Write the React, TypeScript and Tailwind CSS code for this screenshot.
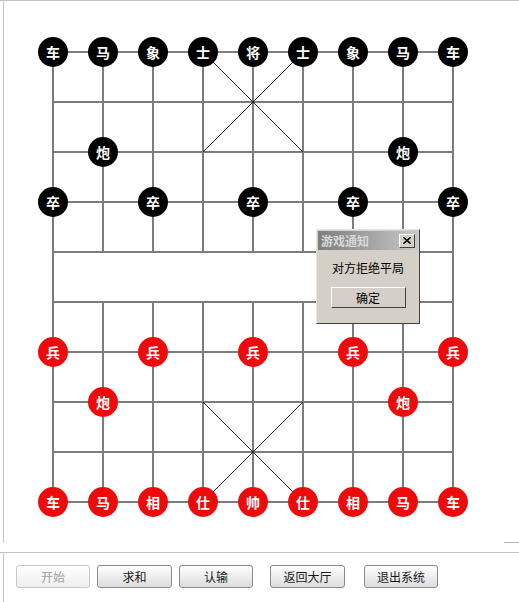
import type { FC } from 'react'

const FONT = { fontFamily: '"Noto Sans CJK SC", "Liberation Sans", sans-serif' }

const COLS = [53, 103, 153, 203, 253, 303, 353, 403, 453]
const ROWS = [51, 101, 151, 201, 251, 301, 351, 401, 451, 501]

type Piece = { c: number, r: number, t: string, red?: boolean }

const back = ['车', '马', '象', '士', '将', '士', '象', '马', '车']
const redBack = ['车', '马', '相', '仕', '帅', '仕', '相', '马', '车']

const pieces: Piece[] = [
  ...back.map((t, c) => ({ c, r: 0, t })),
  { c: 1, r: 2, t: '炮' },
  { c: 7, r: 2, t: '炮' },
  ...[0, 2, 4, 6, 8].map(c => ({ c, r: 3, t: '卒' })),
  ...[0, 2, 4, 6, 8].map(c => ({ c, r: 6, t: '兵', red: true })),
  { c: 1, r: 7, t: '炮', red: true },
  { c: 7, r: 7, t: '炮', red: true },
  ...redBack.map((t, c) => ({ c, r: 9, t, red: true })),
]

const Board: FC = () => (
  <svg className="absolute left-0 top-0" width="519" height="543">
    <g stroke="#7c7c7c" strokeWidth="2" fill="none">
      {ROWS.map(y => (
        <line key={y} x1={53} y1={y} x2={453} y2={y} />
      ))}
      {COLS.map((x, i) =>
        i === 0 || i === 8
          ? <line key={x} x1={x} y1={51} x2={x} y2={501} />
          : (
              <g key={x}>
                <line x1={x} y1={51} x2={x} y2={251} />
                <line x1={x} y1={301} x2={x} y2={501} />
              </g>
            ),
      )}
    </g>
    <g stroke="#222" strokeWidth="1">
      <line x1={203} y1={51} x2={303} y2={151} />
      <line x1={303} y1={51} x2={203} y2={151} />
      <line x1={203} y1={401} x2={303} y2={501} />
      <line x1={303} y1={401} x2={203} y2={501} />
    </g>
  </svg>
)

const Dialog: FC = () => (
  <div className="absolute left-[316px] top-[228px] w-[104px] h-[95px] bg-[#d4d0c8] border border-t-[#e8e6e0] border-l-[#e8e6e0] border-r-[#404040] border-b-[#404040] p-px">
    <div className="h-[19px] flex items-center justify-between pl-[3px] pr-[3px] bg-gradient-to-r from-[#7e7e7e] to-[#c8c8c8]">
      <span className="text-[12px] font-bold text-[#d8d8d8] leading-none">游戏通知</span>
      <div className="w-[16px] h-[14px] bg-[#d4d0c8] border border-t-white border-l-white border-r-[#404040] border-b-[#404040] flex items-center justify-center">
        <svg width="8" height="7" viewBox="0 0 8 7">
          <path d="M0 0 L8 7 M8 0 L0 7" stroke="#000" strokeWidth="1.6" />
        </svg>
      </div>
    </div>
    <div className="flex flex-col items-center">
      <div className="mt-[10px] text-[12px] text-black leading-[16px]">对方拒绝平局</div>
      <div className="mt-[11px] w-[75px] h-[21px] border border-t-white border-l-white border-r-[#404040] border-b-[#404040] flex items-center justify-center text-[12px] text-black">
        确定
      </div>
    </div>
  </div>
)

const Btn: FC<{ label: string, w: number, disabled?: boolean }> = ({ label, w, disabled }) => (
  <div
    className={`h-[23px] rounded-[3px] border flex items-center justify-center text-[12px] bg-gradient-to-b ${
      disabled
        ? 'border-[#c8c8c8] from-white to-[#eeeeee] text-[#a0a0a0]'
        : 'border-[#8a8a8a] from-white to-[#dcdcdc] text-[#1a1a1a]'
    }`}
    style={{ width: w }}
  >
    {label}
  </div>
)

export default function App() {
  return (
    <div className="w-[519px] h-[602px] bg-white relative overflow-hidden" style={FONT}>
      <div className="relative h-[543px] border-t border-[#c4c4c4]">
        <div className="absolute left-[3px] top-0 bottom-0 w-px bg-[#c4c4c4]" />
        <Board />
        {pieces.map((p, i) => (
          <div
            key={i}
            className={`absolute w-[30px] h-[30px] rounded-full flex items-center justify-center text-white text-[14px] font-bold leading-none ${
              p.red ? 'bg-[#ee0a0a]' : 'bg-black'
            }`}
            style={{ left: COLS[p.c] - 15, top: ROWS[p.r] - 15 }}
          >
            {p.t}
          </div>
        ))}
        <Dialog />
        <div className="absolute right-0 bottom-0 w-[15px] h-px bg-[#b0b0b0]" />
      </div>
      <div className="h-[9px]" />
      <div className="relative h-[50px] border-t border-[#c4c4c4]">
        <div className="absolute left-[3px] top-0 bottom-0 w-px bg-[#c4c4c4]" />
        <div className="flex items-center pl-[16px] pt-[12px]">
          <Btn label="开始" w={74} disabled />
          <div className="w-[7px]" />
          <Btn label="求和" w={75} />
          <div className="w-[7px]" />
          <Btn label="认输" w={74} />
          <div className="w-[17px]" />
          <Btn label="返回大厅" w={75} />
          <div className="w-[19px]" />
          <Btn label="退出系统" w={74} />
        </div>
      </div>
    </div>
  )
}
